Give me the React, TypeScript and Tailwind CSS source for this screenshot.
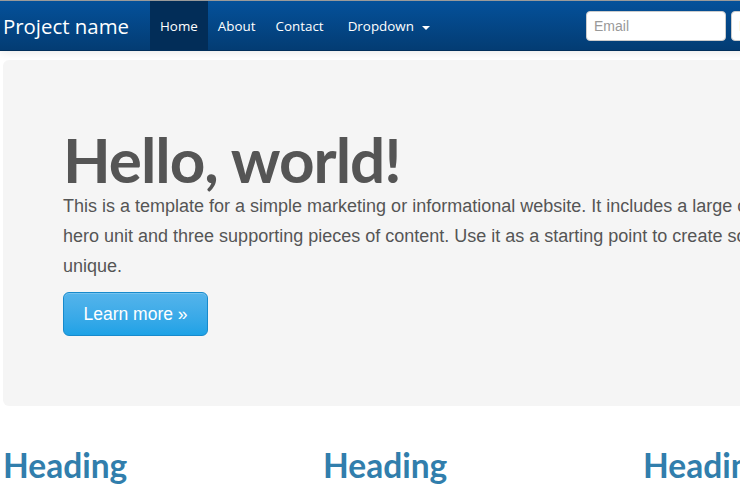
import React from "react";

const navItems = ["Home", "About", "Contact"];

function Navbar() {
  return (
    <div className="w-full border-t border-[#9a9a9a] bg-gradient-to-b from-[#04519b] to-[#033c73] shadow-[0_1px_10px_rgba(0,0,0,0.1)] border-b border-b-[#022f5a]">
      <div className="ml-[3px] w-[940px] h-[49px] flex items-stretch font-['Open_Sans',sans-serif]">
        <a className="flex items-center pt-[1px] pr-[21px] text-[20.4px] text-white leading-none">Project name</a>
        <ul className="flex items-stretch">
          {navItems.map((item, i) => (
            <li
              key={item}
              className={
                i === 0
                  ? "flex items-center pt-[2px] px-[10px] text-[13.4px] text-white bg-[#022d58]"
                  : "flex items-center pt-[2px] px-[10px] text-[13.4px] text-white"
              }
            >
              {item}
            </li>
          ))}
          <li className="flex items-center pt-[2px] pl-[14px] pr-[10px] text-[13.4px] text-white">
            Dropdown
            <span className="ml-[8px] mt-[2px] w-0 h-0 border-l-[4px] border-r-[4px] border-t-[4px] border-l-transparent border-r-transparent border-t-white" />
          </li>
        </ul>
        <div className="ml-auto flex items-center gap-[5px]">
          <input
            className="w-[140px] h-[30px] px-[7px] rounded-[4px] bg-white border border-[#cccccc] text-[14px] text-[#555] placeholder:text-[#999] font-['Liberation_Sans',sans-serif] outline-none"
            placeholder="Email"
          />
          <input
            className="w-[140px] h-[30px] px-[7px] rounded-[4px] bg-white border border-[#cccccc] text-[14px] text-[#555] placeholder:text-[#999] font-['Liberation_Sans',sans-serif] outline-none"
            placeholder="Password"
            type="password"
          />
          <button className="w-[67px] h-[30px] rounded-[4px] border border-[#cccccc] bg-gradient-to-b from-white to-[#e6e6e6] text-[14px] text-[#333] font-['Liberation_Sans',sans-serif]">
            Sign in
          </button>
        </div>
      </div>
    </div>
  );
}

function Hero() {
  return (
    <div className="mt-[9px] mb-[30px] w-[940px] rounded-[6px] bg-[#f5f5f5] px-[60px] pt-[68px] pb-[70px]">
      <h1 className="text-[62px] leading-[63px] font-bold tracking-[-1px] text-[#555555] font-['Lato',sans-serif]">
        Hello, world!
      </h1>
      <p className="mb-[11px] text-[18px] leading-[30px] text-[#555555] font-['Liberation_Sans',sans-serif]">
        This is a template for a simple marketing or informational website. It includes a large callout called the hero unit and three supporting pieces of content. Use it as a starting point to create something more unique.
      </p>
      <button className="h-[44px] w-[145px] rounded-[6px] border border-[#178acc] bg-gradient-to-b from-[#54b4eb] to-[#1da2e6] text-[17.5px] text-white font-['Liberation_Sans',sans-serif] shadow-[inset_0_1px_0_rgba(255,255,255,0.2)]">
        Learn more &raquo;
      </button>
    </div>
  );
}

export default function App() {
  return (
    <div className="w-[740px] h-[500px] overflow-hidden bg-white">
      <div className="w-[1000px]">
        <Navbar />
        <div className="ml-[3px] w-[940px]">
          <Hero />
          <div className="grid grid-cols-3 gap-[20px]">
            {[0, 1, 2].map((i) => (
              <div key={i}>
                <h2 className="mt-[9px] mb-[10px] text-[33.5px] leading-[40px] font-bold text-[#317eac] font-['Lato',sans-serif]">
                  Heading
                </h2>
              </div>
            ))}
          </div>
        </div>
      </div>
    </div>
  );
}
